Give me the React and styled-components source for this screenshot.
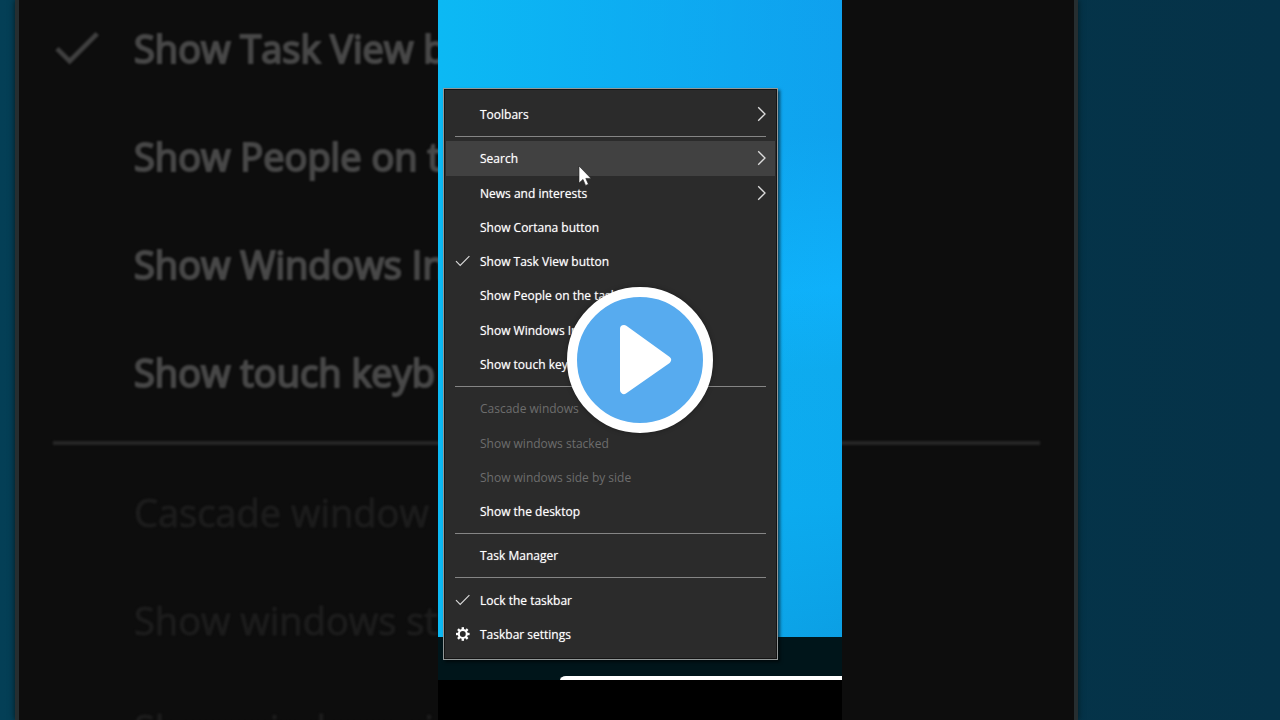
import React from "react";
import styled, { createGlobalStyle, css } from "styled-components";

const GlobalStyle = createGlobalStyle`
  * { box-sizing: border-box; }
  body {
    margin: 0;
    background: #0d0d0d;
    font-family: "Open Sans", "Noto Sans", sans-serif;
  }
  svg { display: block; }
`;

const Stage = styled.main`
  display: grid;
  grid-template-columns: minmax(0, 1fr);
  height: 100vh;
  overflow: hidden;
  > * { grid-area: 1 / 1; }
`;

/* Enlarged, dimmed copy of the menu behind the video */
const Backdrop = styled.div`
  display: grid;
  grid-template-columns: 15px minmax(0, 1fr) 202px;
  min-height: 0;
  overflow: hidden;
  background: linear-gradient(90deg, #043f56 0%, #04364a 50%, #053248 100%);
`;

const BackdropPanel = styled.div`
  grid-column: 2;
  min-height: 0;
  overflow: hidden;
  background: #0d0d0d;
  border: solid #262e30;
  border-width: 0 4px;
  box-shadow: 0 0 6px #04191f;
`;

const BackdropList = styled.ul`
  list-style: none;
  margin: -6px 0 0;
  padding: 0;
  filter: blur(1px);
`;

const BackdropRow = styled.li`
  display: grid;
  grid-template-columns: 48px 1fr;
  column-gap: 32px;
  align-items: center;
  height: 108px;
  padding-left: 35px;
  font-size: 38px;
  line-height: 48px;
  font-weight: ${(p) => (p.$dim ? 400 : 500)};
  white-space: nowrap;
  color: ${(p) => (p.$dim ? "#1d1d1d" : "#484848")};
  -webkit-text-stroke: ${(p) => (p.$dim ? "1px" : "2px")} currentColor;
`;

const BackdropDivider = styled.li`
  height: 32px;
  margin: 0 34px;
  padding: 15px 0 13px;
  background: #262626 content-box;
`;

const Video = styled.section`
  z-index: 1;
  display: grid;
  grid-template-columns: minmax(0, 1fr);
  justify-self: center;
  width: 100%;
  max-width: 404px;
  min-height: 0;
  > * { grid-area: 1 / 1; }
`;

const Desktop = styled.div`
  display: flex;
  flex-direction: column;
  background: #000;
  padding-bottom: 40px;
`;

const Wallpaper = styled.div`
  flex: 1;
  background:
    linear-gradient(90deg, #0cb9f4 0, rgba(12, 180, 244, 0.8) 35%, rgba(14, 176, 242, 0) 100%),
    linear-gradient(175deg, #0fa0ee 0%, #0fa2ee 25%, #0fb0fa 48%, #0eaaee 60%, #0ca9ee 80%, #0c9fe4 100%);
`;

const Taskbar = styled.div`
  display: flex;
  flex-direction: column;
  justify-content: flex-end;
  height: 43px;
  background: #00151a;
`;

const SearchEdge = styled.div`
  height: 4px;
  margin-left: 122px;
  border-top-left-radius: 6px 4px;
  background: #fff;
`;

const Menu = styled.div`
  position: relative;
  display: flex;
  flex-direction: column;
  margin: 88px 64px 60px 5px;
  padding: 8px 2px;
  background: #2b2b2b;
  border: 1px solid #929898;
  box-shadow: inset 0 0 0 1px #141414, 2px 2px 3px rgba(0, 0, 0, 0.6);
`;

const MenuItem = styled.button`
  flex: 1;
  display: grid;
  grid-template-columns: 16px 1fr 10px;
  column-gap: 9px;
  align-items: center;
  min-height: 0;
  padding: 0 8px 0 9px;
  border: 0;
  background: ${(p) => (p.$active ? "#414141" : "transparent")};
  font-family: inherit;
  font-size: 12px;
  font-weight: 500;
  line-height: 18px;
  text-align: left;
  white-space: nowrap;
  color: #fff;
  text-shadow: 0 0 1px rgba(255, 255, 255, 0.6);
  ${(p) =>
    p.disabled &&
    css`
      font-weight: 400;
      color: #6d6d6d;
      text-shadow: none;
    `}
`;

const Label = styled.span`
  padding-top: 2px;
`;

const Divider = styled.hr`
  width: auto;
  height: 10px;
  margin: 0 9px;
  padding: 5px 0 4px;
  border: 0;
  background: #858585 content-box;
`;

const Pointer = styled.svg`
  position: absolute;
  left: 134px;
  top: 76px;
  width: 14px;
  height: 22px;
`;

const PlayButton = styled.button`
  place-self: center;
  z-index: 2;
  display: grid;
  place-items: center;
  width: 146px;
  height: 146px;
  padding: 0;
  border: 10px solid #fff;
  border-radius: 50%;
  background: #57abef;
  box-shadow: 0 0 5px rgba(0, 0, 0, 0.35);
`;

const Check = ({ size = 16, width = 1.2, color = "#d8d8d8" }) => (
  <svg width={size} height={size} viewBox="0 0 16 16" fill="none" stroke={color} strokeWidth={width} aria-hidden="true">
    <path d="M1 8.2 L5.2 12.4 L14.4 3.2" />
  </svg>
);

const Chevron = () => (
  <svg width="10" height="16" viewBox="0 0 10 16" fill="none" stroke="#dcdcdc" strokeWidth="1.3" aria-hidden="true">
    <path d="M1.2 1.2 L8 8 L1.2 14.8" />
  </svg>
);

const Gear = () => (
  <svg width="16" height="16" viewBox="0 0 16 16" fill="none" stroke="#fff" aria-hidden="true">
    <circle cx="7.8" cy="8" r="4" strokeWidth="2.1" />
    <g strokeWidth="2.4">
      {[0, 45, 90, 135, 180, 225, 270, 315].map((a) => (
        <path key={a} d="M7.8 1.2 V3.8" transform={`rotate(${a} 7.8 8)`} />
      ))}
    </g>
  </svg>
);

const items = [
  { label: "Toolbars", sub: true },
  null,
  { label: "Search", sub: true, active: true },
  { label: "News and interests", sub: true },
  { label: "Show Cortana button" },
  { label: "Show Task View button", icon: <Check /> },
  { label: "Show People on the taskbar" },
  { label: "Show Windows Ink" },
  { label: "Show touch keyboard" },
  null,
  { label: "Cascade windows", disabled: true },
  { label: "Show windows stacked", disabled: true },
  { label: "Show windows side by side", disabled: true },
  { label: "Show the desktop" },
  null,
  { label: "Task Manager" },
  null,
  { label: "Lock the taskbar", icon: <Check /> },
  { label: "Taskbar settings", icon: <Gear /> },
];

const backdropItems = [
  { label: "Show Task View b", checked: true },
  { label: "Show People on t" },
  { label: "Show Windows In" },
  { label: "Show touch keyb" },
  null,
  { label: "Cascade window", dim: true },
  { label: "Show windows st", dim: true },
  { label: "Show windows si", dim: true },
];

export default function App() {
  return (
    <>
      <GlobalStyle />
      <Stage>
        <Backdrop aria-hidden="true">
          <BackdropPanel>
            <BackdropList>
              {backdropItems.map((item, i) =>
                item ? (
                  <BackdropRow key={i} $dim={item.dim}>
                    <span>{item.checked && <Check size={48} width={1.6} color="#404040" />}</span>
                    <span>{item.label}</span>
                  </BackdropRow>
                ) : (
                  <BackdropDivider key={i} />
                )
              )}
            </BackdropList>
          </BackdropPanel>
        </Backdrop>
        <Video>
          <Desktop>
            <Wallpaper />
            <Taskbar>
              <SearchEdge />
            </Taskbar>
          </Desktop>
          <Menu role="menu">
            {items.map((item, i) =>
              item ? (
                <MenuItem key={i} type="button" role="menuitem" disabled={item.disabled} $active={item.active}>
                  <span>{item.icon}</span>
                  <Label>{item.label}</Label>
                  {item.sub && <Chevron />}
                </MenuItem>
              ) : (
                <Divider key={i} />
              )
            )}
            <Pointer viewBox="0 0 14 22" aria-hidden="true">
              <path d="M1 1 V18 L5 14.4 L7.6 20.4 L10.4 19.2 L7.8 13.4 H13 Z" fill="#fff" stroke="#222" strokeWidth="0.6" />
            </Pointer>
          </Menu>
        </Video>
        <PlayButton type="button" aria-label="Play">
          <svg width="126" height="126" viewBox="0 0 126 126" aria-hidden="true">
            <path d="M47 32 L90 63 L47 93 Z" fill="#fff" stroke="#fff" strokeWidth="8" strokeLinejoin="round" />
          </svg>
        </PlayButton>
      </Stage>
    </>
  );
}
